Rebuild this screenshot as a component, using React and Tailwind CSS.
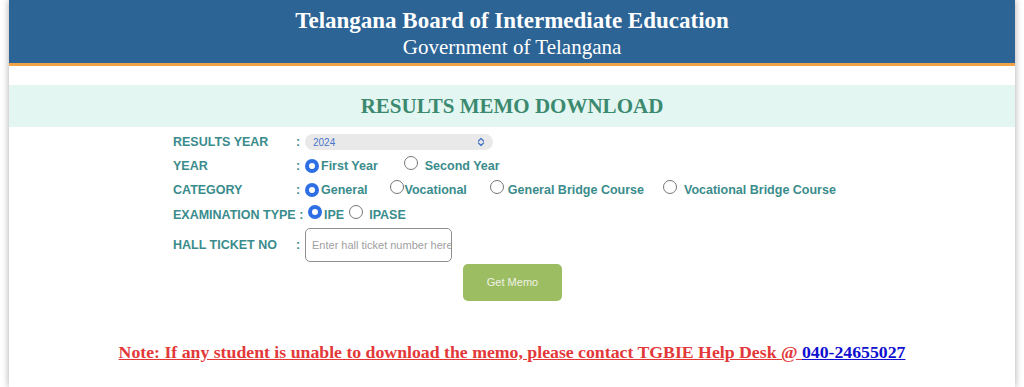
function Radio({ checked }) {
  return checked ? (
    <span className="inline-block w-[14px] h-[14px] rounded-full border-[4px] border-[#2f6fe4] bg-white shrink-0" />
  ) : (
    <span className="inline-block w-[14px] h-[14px] rounded-full border border-[#767676] bg-white shrink-0" />
  );
}

function Row({ label, colon = true, children, className = "" }) {
  return (
    <div className={`flex items-center ${className}`}>
      <div className="w-[123px] whitespace-nowrap">{label}</div>
      {colon && <div className="w-[9px]">:</div>}
      <div className="flex items-center">{children}</div>
    </div>
  );
}

export default function App() {
  return (
    <div className="w-[1024px] h-[387px] bg-white overflow-hidden px-[9px]">
      <div className="h-full bg-white shadow-[0_0_7px_rgba(0,0,0,0.35)]">
        <div className="bg-[#2c6496] h-[63px] flex flex-col items-center text-white font-['Liberation_Serif',serif]">
          <div className="text-[23px] font-bold leading-none mt-[9px]">Telangana Board of Intermediate Education</div>
          <div className="text-[21px] leading-none mt-[5px]">Government of Telangana</div>
        </div>
        <div className="h-[3px] bg-[#eea349]" />
        <div className="h-[19px]" />
        <div className="bg-[#e3f6f1] h-[42px] flex items-center justify-center">
          <div className="text-[21px] font-bold text-[#3b8a70] font-['Liberation_Serif',serif] mt-[1px]">
            RESULTS MEMO DOWNLOAD
          </div>
        </div>
        <div className="pl-[164px] pt-[3px] text-[12.5px] font-bold text-[#3a8c8c] font-['Liberation_Sans',sans-serif]">
          <Row label="RESULTS YEAR" className="h-[24px]">
            <div className="w-[188px] h-[16px] rounded-full bg-[#e9e9e9] flex items-center justify-between px-[8px] text-[10px] font-normal text-[#4a76c9]">
              <span>2024</span>
              <svg width="8" height="10" viewBox="0 0 8 10" fill="none" stroke="#4a76c9" strokeWidth="1.4" strokeLinecap="round" strokeLinejoin="round">
                <path d="M1.5 4 L4 1.5 L6.5 4" />
                <path d="M1.5 6 L4 8.5 L6.5 6" />
              </svg>
            </div>
          </Row>
          <Row label="YEAR" className="h-[24px]">
            <Radio checked />
            <span className="ml-[2px]">First Year</span>
            <span className="ml-[26px]"><Radio /></span>
            <span className="ml-[7px]">Second Year</span>
          </Row>
          <Row label="CATEGORY" className="h-[24px]">
            <Radio checked />
            <span className="ml-[2px]">General</span>
            <span className="ml-[22px]"><Radio /></span>
            <span className="ml-[1px]">Vocational</span>
            <span className="ml-[23px]"><Radio /></span>
            <span className="ml-[4px]">General Bridge Course</span>
            <span className="ml-[19px]"><Radio /></span>
            <span className="ml-[7px]">Vocational Bridge Course</span>
          </Row>
          <Row label="EXAMINATION TYPE :" colon={false} className="h-[26px]">
            <span className="ml-[12px]"><Radio checked /></span>
            <span className="ml-[2px]">IPE</span>
            <span className="ml-[5px]"><Radio /></span>
            <span className="ml-[6px]">IPASE</span>
          </Row>
          <Row label="HALL TICKET NO" className="h-[34px]">
            <div className="w-[147px] h-[34px] rounded-[5px] border border-[#8f8f8f] flex items-center px-[6px] text-[11px] font-normal text-[#a0a0a0] overflow-hidden whitespace-nowrap">
              Enter hall ticket number here
            </div>
          </Row>
          <div className="ml-[290px] w-[99px] h-[37px] rounded-[5px] bg-[#9dbd63] flex items-center justify-center text-[11px] font-normal text-[#eef3e4] mt-[2px]">
            Get Memo
          </div>
        </div>
        <div className="mt-[40px] text-center font-['Liberation_Serif',serif] text-[17.75px] leading-[22px] font-bold">
          <span className="text-[#e3383a] underline">Note: If any student is unable to download the memo, please contact TGBIE Help Desk @ </span>
          <a className="text-[#1010d0] underline">040-24655027</a>
        </div>
      </div>
    </div>
  );
}
